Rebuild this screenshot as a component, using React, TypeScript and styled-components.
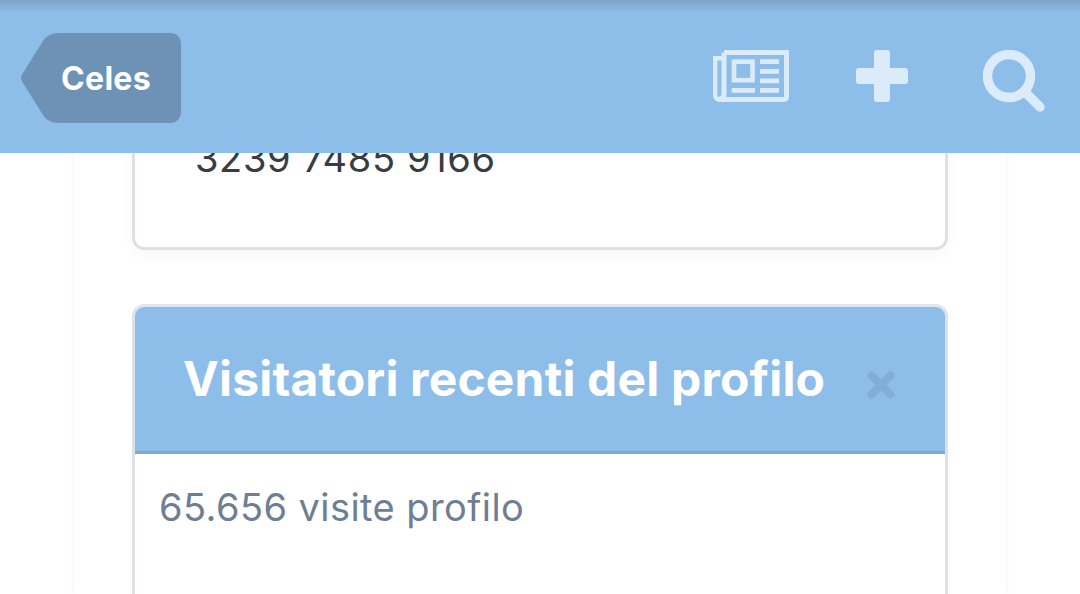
import styled, { createGlobalStyle } from 'styled-components';

const GlobalStyle = createGlobalStyle`
  html, body {
    margin: 0;
    padding: 0;
    background: #ffffff;
    font-family: 'Inter', 'Liberation Sans', sans-serif;
    overflow: hidden;
  }
`;

const NewspaperIcon = () => (
  <svg width="76" height="52" viewBox="0 0 76 52" fill="none" stroke="#dcebfa">
    <path
      d="M11 2.500H73.500V47a2.500 2.500 0 0 1-2.500 2.500H6.500C3.500 49.500 11 49.500 11 44.500V2.500"
      strokeWidth="5"
    />
    <path d="M11 8.300H2.200V45.500a4 4 0 0 0 4 4" strokeWidth="4.400" />
    <rect x="21" y="11.700" width="18.500" height="18.500" strokeWidth="4.600" />
    <path
      d="M47 11.700h19M47 21.300h19M47 30.800h19M18.700 40.300h23.300M47 40.300h19"
      strokeWidth="4.700"
    />
  </svg>
);

const PlusIcon = () => (
  <svg width="52" height="52" viewBox="0 0 52 52">
    <path
      d="M21 0h10a3 3 0 0 1 3 3v15h15a3 3 0 0 1 3 3v10a3 3 0 0 1-3 3H34v15a3 3 0 0 1-3 3H21a3 3 0 0 1-3-3V34H3a3 3 0 0 1-3-3V21a3 3 0 0 1 3-3h15V3a3 3 0 0 1 3-3z"
      fill="#dcebfa"
    />
  </svg>
);

const SearchIcon = () => (
  <svg width="62" height="62" viewBox="0 0 62 62" fill="none" stroke="#dcebfa">
    <circle cx="26" cy="26" r="21.500" strokeWidth="9.500" />
    <path d="M42 42L57 57" strokeWidth="9.500" strokeLinecap="round" />
  </svg>
);

const CloseIcon = () => (
  <svg width="28" height="28" viewBox="0 0 28 28" fill="none">
    <path d="M4.500 4.500L23.500 23.500M23.500 4.500L4.500 23.500" stroke="#82add5" strokeWidth="8" strokeLinecap="round" />
  </svg>
);

export default function App() {
  return (
    <Page>
      <GlobalStyle />
      <Header>
        <BackTag>
          <TagShape viewBox="0 0 160 90" preserveAspectRatio="none">
            <path d="M0 45Q0 43 2 40L22 8Q27 0 38 0H148Q160 0 160 12V78Q160 90 148 90H38Q27 90 22 82L2 50Q0 47 0 45z" fill="#6d92b5" />
          </TagShape>
          <TagLabel>Celes</TagLabel>
        </BackTag>
        <Actions>
          <NewsButton>
            <NewspaperIcon />
          </NewsButton>
          <PlusButton>
            <PlusIcon />
          </PlusButton>
          <SearchButton>
            <SearchIcon />
          </SearchButton>
        </Actions>
      </Header>
      <Column>
        <InfoCard>
          <PhoneNumber>3239 7485 9166</PhoneNumber>
        </InfoCard>
        <VisitorsCard>
          <VisitorsHead>
            <VisitorsTitle>Visitatori recenti del profilo</VisitorsTitle>
            <CloseButton>
              <CloseIcon />
            </CloseButton>
          </VisitorsHead>
          <VisitorsBody>65.656 visite profilo</VisitorsBody>
        </VisitorsCard>
      </Column>
    </Page>
  );
}

const Page = styled.div`
  position: relative;
  width: 1080px;
  height: 594px;
  overflow: hidden;
  background: #ffffff;
`;

const Header = styled.header`
  position: absolute;
  top: 0;
  left: 0;
  right: 0;
  z-index: 10;
  height: 153px;
  background: linear-gradient(#7fa5cb 0, #8dbde9 13px);
  display: flex;
  align-items: center;
  justify-content: space-between;
  padding: 3px 35px 0 21px;
  box-sizing: border-box;
`;

const BackTag = styled.div`
  position: relative;
  width: 160px;
  height: 90px;
  display: flex;
  align-items: center;
  justify-content: center;
`;

const TagShape = styled.svg`
  position: absolute;
  inset: 0;
  width: 100%;
  height: 100%;
`;

const TagLabel = styled.span`
  position: relative;
  font-size: 32px;
  font-weight: 700;
  letter-spacing: 0.3px;
  color: #ffffff;
  padding-left: 10px;
`;

const Actions = styled.div`
  display: flex;
  align-items: flex-start;
  height: 62px;
  margin-top: 5px;
`;

const NewsButton = styled.div`
  display: flex;
  margin-right: 67px;
`;

const PlusButton = styled.div`
  display: flex;
  margin-right: 75px;
`;

const SearchButton = styled.div`
  display: flex;
`;

const Column = styled.main`
  width: 932px;
  height: 594px;
  margin: 0 auto;
  box-sizing: border-box;
  padding: 0 58px;
  background: #ffffff;
  box-shadow: 0 0 4px rgba(0, 0, 0, 0.06);
  display: flex;
  flex-direction: column;
  gap: 54px;
`;

const InfoCard = styled.section`
  height: 250px;
  flex: none;
  box-sizing: border-box;
  border: 3px solid #dfe1e5;
  border-radius: 12px;
  box-shadow: 0 6px 14px rgba(0, 0, 0, 0.03);
  padding: 131px 0 0 60px;
`;

const PhoneNumber = styled.div`
  font-size: 38px;
  line-height: 48px;
  color: #383d43;
  letter-spacing: 0.65px;
`;

const VisitorsCard = styled.section`
  flex: none;
  height: 400px;
  box-sizing: border-box;
  border: 3px solid #dfe1e5;
  border-top-color: #dfe6ef;
  border-radius: 12px;
  overflow: hidden;
`;

const VisitorsHead = styled.div`
  height: 147px;
  box-sizing: border-box;
  background: #8dbde9;
  border-bottom: 3px solid #7fa9ce;
  display: flex;
  align-items: center;
  padding-left: 48px;
`;

const VisitorsTitle = styled.h2`
  margin: 0 0 1px;
  font-size: 48px;
  font-weight: 700;
  letter-spacing: 0.17px;
  color: #ffffff;
  white-space: nowrap;
`;

const CloseButton = styled.div`
  display: flex;
  margin: 12px 0 0 42px;
`;

const VisitorsBody = styled.div`
  padding: 29px 24px;
  font-size: 38px;
  line-height: 48px;
  letter-spacing: 0.43px;
  color: #6f7e92;
`;
